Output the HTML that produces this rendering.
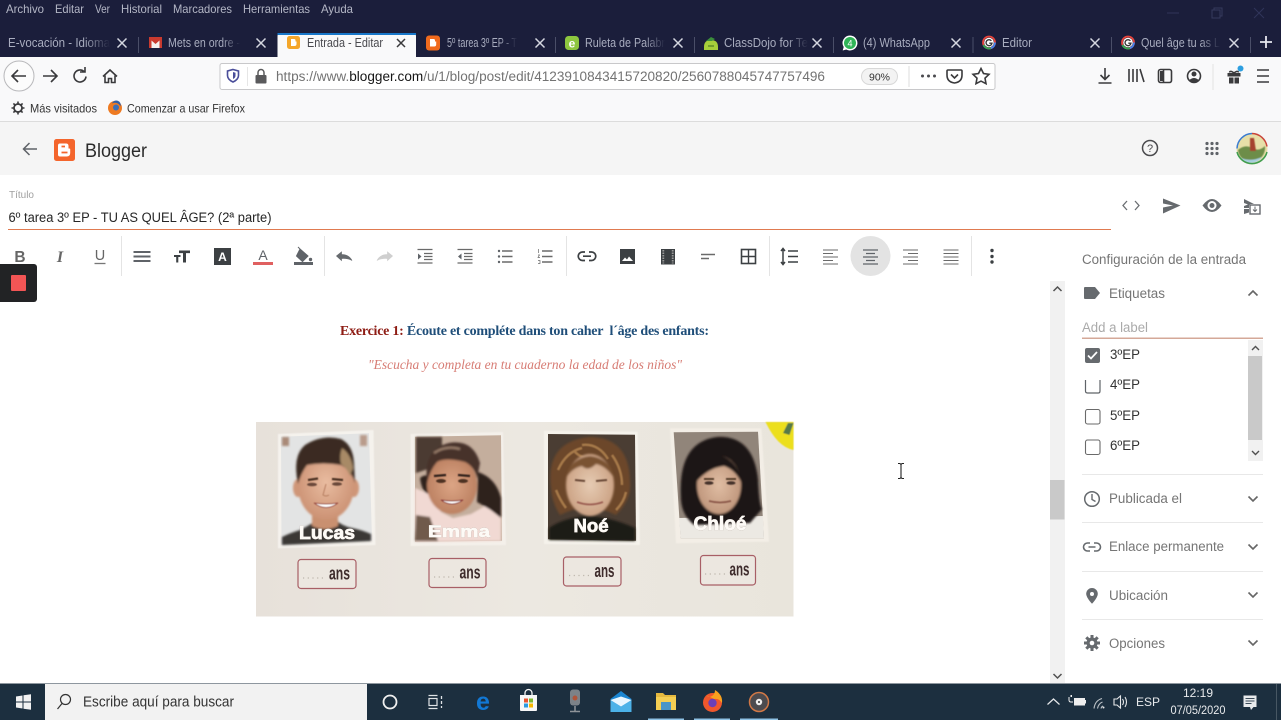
<!DOCTYPE html>
<html lang="es"><head><meta charset="utf-8"><title>Entrada - Editar</title>
<style>
html,body{margin:0;padding:0;width:1281px;height:720px;overflow:hidden;background:#fff}
svg{display:block}
text{font-family:"Liberation Sans",sans-serif}
.m{font-size:12px;fill:#b4b7c6}
.t{font-size:12.5px;fill:#a9adbf}
.s{font-size:13.5px;fill:#757575}
.i{fill:#666a6e}
.l{stroke:#5f6368;stroke-width:2;fill:none}
.n{stroke:#3a3a3c;stroke-width:1.6;fill:none}
.d{stroke:#e6e6e6;stroke-width:1}
.ts{stroke:#4a4e68;stroke-width:1}
.nm{font-weight:bold;fill:#fdfaf6;stroke:#fdfaf6;stroke-width:.7;filter:drop-shadow(.8px .8px .3px #6f5d52)}
.ans{font-weight:bold;font-size:18px;fill:#3e2c2c}
</style></head><body>
<svg width="1281" height="720" viewBox="0 0 1281 720" xmlns="http://www.w3.org/2000/svg">
<defs>
<filter id="b0" x="-20%" y="-20%" width="140%" height="140%"><feGaussianBlur stdDeviation=".6"/></filter>
<filter id="b1" x="-20%" y="-20%" width="140%" height="140%"><feGaussianBlur stdDeviation="1"/></filter>
<filter id="b2" x="-30%" y="-30%" width="160%" height="160%"><feGaussianBlur stdDeviation="3"/></filter>
<linearGradient id="pg" x1="0" x2="1" y1="0" y2="0"><stop offset="0" stop-color="#e7e1da"/><stop offset=".5" stop-color="#ece8e1"/><stop offset="1" stop-color="#e9e5dc"/></linearGradient>
<linearGradient id="fd" x1="0" x2="1" y1="0" y2="0"><stop offset="0" stop-color="#a9adbf"/><stop offset=".75" stop-color="#a9adbf"/><stop offset="1" stop-color="#1b1e3b"/></linearGradient>
<radialGradient id="sk1" cx=".5" cy=".45" r=".6"><stop offset="0" stop-color="#e9bca0"/><stop offset="1" stop-color="#c98e70"/></radialGradient>
<radialGradient id="sk2" cx=".5" cy=".5" r=".6"><stop offset="0" stop-color="#dca585"/><stop offset="1" stop-color="#b67a5b"/></radialGradient>
<radialGradient id="sk3" cx=".5" cy=".5" r=".6"><stop offset="0" stop-color="#e6cbb3"/><stop offset="1" stop-color="#c79b7c"/></radialGradient>
<radialGradient id="sk4" cx=".5" cy=".5" r=".6"><stop offset="0" stop-color="#e0bda3"/><stop offset="1" stop-color="#ba9076"/></radialGradient>
<g id="x"><path d="M-4.5-4.5L4.5 4.5M4.5-4.5L-4.5 4.5" stroke="#d5d7e0" stroke-width="1.5" fill="none"/></g>
<g id="gg"><circle r="6" fill="none" stroke="#e8453c" stroke-width="1.8"/><path d="M-5.5 2.5A6 6 0 0 0 2 5.7" fill="none" stroke="#34a853" stroke-width="1.8"/><path d="M2 5.7A6 6 0 0 0 6 0" fill="none" stroke="#4285f4" stroke-width="1.8"/><circle r="4.8" fill="#fff"/><path d="M2.4-1.7A3 3 0 1 0 3 .7H.3" fill="none" stroke="#333" stroke-width="1.3"/></g>
<g id="chd"><path d="M-4.5-2.5L0 2L4.5-2.5" fill="none" stroke="#666" stroke-width="1.6"/></g>
<g id="chu"><path d="M-4.5 2.5L0-2L4.5 2.5" fill="none" stroke="#666" stroke-width="1.6"/></g>
</defs>

<!-- browser chrome -->
<rect width="1281" height="57" fill="#1b1e3b"/>
<text class="m" x="6" y="13" textLength="38" lengthAdjust="spacingAndGlyphs">Archivo</text>
<text class="m" x="55" y="13" textLength="29" lengthAdjust="spacingAndGlyphs">Editar</text>
<text class="m" x="95" y="13" textLength="15" lengthAdjust="spacingAndGlyphs">Ver</text>
<text class="m" x="121" y="13" textLength="41" lengthAdjust="spacingAndGlyphs">Historial</text>
<text class="m" x="173" y="13" textLength="59" lengthAdjust="spacingAndGlyphs">Marcadores</text>
<text class="m" x="243" y="13" textLength="67" lengthAdjust="spacingAndGlyphs">Herramientas</text>
<text class="m" x="321" y="13" textLength="32" lengthAdjust="spacingAndGlyphs">Ayuda</text>
<path d="M1167 13h12" stroke="#30345a"/><rect x="1212" y="10" width="8" height="8" fill="none" stroke="#363a5c"/><path d="M1214 10V8h8v8h-2" fill="none" stroke="#363a5c"/><path d="M1254 8l10 10M1264 8l-10 10" stroke="#30345a"/>

<!-- tabs -->
<text x="8" y="47" style="font-size:12.5px;fill:url(#fd)" textLength="102" lengthAdjust="spacingAndGlyphs">E-vocación - Idioma</text>
<use href="#x" x="122" y="43"/><path class="ts" d="M138.5 37V53"/>
<rect x="149" y="37" width="13" height="11" fill="#f4f0ee"/><path d="M149 37h13v11h-2.500v-7.500l-4 3.500-4-3.500v7.500H149z" fill="#c93a2f"/>
<text x="168" y="47" style="font-size:12.5px;fill:url(#fd)" textLength="72" lengthAdjust="spacingAndGlyphs">Mets en ordre - </text>
<use href="#x" x="261" y="43"/>
<path d="M277.5 57V36q0-3 3-3H413q3 0 3 3V57z" fill="#f9f9fa"/><rect x="277.500" y="33" width="138.500" height="2" fill="#1877c9"/>
<rect x="287" y="36" width="13" height="13" rx="2.500" fill="#f4a62a"/><path d="M291 39h3q1.500 0 1.500 1.500v1h1v2.500q0 2-2 2h-3.500z" fill="#fff"/>
<text x="307" y="47" style="font-size:12.5px;fill:#4a4a4f" textLength="76" lengthAdjust="spacingAndGlyphs">Entrada - Editar</text>
<path d="M397 39l8 8M405 39l-8 8" stroke="#3a3a3c" stroke-width="1.500"/>
<rect x="426" y="35.5" width="14" height="15" rx="3" fill="#f06a1d"/><path d="M430 39h3.500q1.500 0 1.500 1.500v1h1.200v3q0 2-2 2H430z" fill="#fff"/>
<text x="447" y="47" style="font-size:12.5px;fill:url(#fd)" textLength="70" lengthAdjust="spacingAndGlyphs">5º tarea 3º EP - T</text>
<use href="#x" x="540" y="43"/><path class="ts" d="M555.5 37V53"/>
<rect x="565" y="36" width="14" height="14" rx="3.500" fill="#8dc63f"/><text x="572" y="47.5" text-anchor="middle" style="font-size:12px;font-weight:bold;fill:#fff">e</text>
<text x="585" y="47" style="font-size:12.5px;fill:url(#fd)" textLength="80" lengthAdjust="spacingAndGlyphs">Ruleta de Palabr</text>
<use href="#x" x="678" y="43"/><path class="ts" d="M694.5 37V53"/>
<path d="M704 47q0-7 7-7t7 7v3h-14z" fill="#a6cf3a"/><path d="M706 41l5-4 4 2-3 2z" fill="#3b8f3b"/><path d="M708 46h6" stroke="#3c6b1f"/>
<text x="724" y="47" style="font-size:12.5px;fill:url(#fd)" textLength="84" lengthAdjust="spacingAndGlyphs">ClassDojo for Te</text>
<use href="#x" x="817" y="43"/><path class="ts" d="M833.5 37V53"/>
<path d="M850 35.5a7.500 7.500 0 1 1-3.800 14l-3.500 1 1-3.500a7.500 7.500 0 0 1 6.300-11.500z" fill="#fff"/><circle cx="850" cy="43" r="6" fill="#2fb457"/><text x="850" y="46.5" text-anchor="middle" style="font-size:9px;fill:#fff">4</text>
<text x="863" y="47" class="t" textLength="67" lengthAdjust="spacingAndGlyphs">(4) WhatsApp</text>
<use href="#x" x="956" y="43"/><path class="ts" d="M973 37V53"/>
<use href="#gg" x="989" y="42.5"/>
<text x="1002" y="47" class="t" textLength="30" lengthAdjust="spacingAndGlyphs">Editor</text>
<use href="#x" x="1095" y="43"/><path class="ts" d="M1111.5 37V53"/>
<use href="#gg" x="1128" y="42.5"/>
<text x="1141" y="47" style="font-size:12.5px;fill:url(#fd)" textLength="79" lengthAdjust="spacingAndGlyphs">Quel âge tu as L</text>
<use href="#x" x="1234" y="43"/><path class="ts" d="M1250.5 37V53"/>
<path d="M1260 42h12M1266 36v12" stroke="#e6e7ee" stroke-width="1.800"/>

<!-- nav bar -->
<rect y="57" width="1281" height="64.5" fill="#f9f9fa"/>
<rect y="121" width="1281" height="1" fill="#dcdcdc"/>
<circle cx="19" cy="76" r="15" fill="#fcfcfc" stroke="#b8b8bb"/>
<path class="n" d="M26 76H12M18 70l-6 6 6 6"/>
<path class="n" d="M43 76H57M51 70l6 6-6 6"/>
<path class="n" d="M86 76.5a6 6 0 1 1-2-5M85 67v5h-5"/>
<path class="n" d="M103 76.5l7-6.500 7 6.500M105 75.500v7h3.500v-4h3v4h3.500v-7"/>
<rect x="220" y="63.5" width="775" height="26" rx="2" fill="#fff" stroke="#c8c8ca"/>
<path d="M233 69.5l5.500 1.500v4.500q0 4-5.500 6.500-5.500-2.500-5.500-6.500V71z" fill="none" stroke="#4a4e9a" stroke-width="1.600"/><path d="M233 72l2.500.7v3q0 2-2.500 3.300z" fill="#4a4e9a"/>
<path class="d" d="M247.5 67V86"/>
<rect x="255.5" y="75" width="11" height="8.500" rx="1" fill="#5a5a5c"/><path d="M258 75v-2.500a3 3 0 0 1 6 0V75" fill="none" stroke="#5a5a5c" stroke-width="1.500"/>
<text x="276" y="81" style="font-size:13.5px;fill:#737373" textLength="549" lengthAdjust="spacingAndGlyphs">https://www.<tspan fill="#161616">blogger.com</tspan>/u/1/blog/post/edit/4123910843415720820/2560788045747757496</text>
<rect x="861.5" y="68.5" width="36" height="16" rx="8" fill="#f3f3f3" stroke="#d8d8d8"/>
<text x="879.5" y="80.5" text-anchor="middle" style="font-size:10.5px;fill:#333">90%</text>
<path d="M909 66V87" stroke="#ddd"/>
<circle cx="922.5" cy="76" r="1.500" fill="#4a4a4f"/><circle cx="928.5" cy="76" r="1.500" fill="#4a4a4f"/><circle cx="934.5" cy="76" r="1.500" fill="#4a4a4f"/>
<path d="M948 70h13q1 0 1 1v4q0 7-7.500 8-7.500-1-7.500-8v-4q0-1 1-1z" class="n"/><path d="M951 74.5l3.500 3.500 3.500-3.500" class="n"/>
<path class="n" d="M981 68.5l2.500 5 5.500.8-4 3.900 1 5.500-5-2.600-5 2.600 1-5.500-4-3.900 5.500-.8z"/>
<path class="n" d="M1105 68v11M1100.500 75l4.500 4.500 4.500-4.500M1098.500 83h13"/>
<path class="n" d="M1129 69v13M1133 69v13M1137 69v13M1140 69l4 13"/>
<rect x="1158.5" y="69.5" width="13" height="13" rx="2" class="n"/><path class="n" d="M1163.5 70v12"/><path d="M1160 71h3v10h-3z" fill="#3a3a3c"/>
<circle cx="1194" cy="76" r="6.5" class="n"/><circle cx="1194" cy="74" r="2.5" fill="#3a3a3c"/><path d="M1189.5 80q4.500-4 9 0l-2 2h-5z" fill="#3a3a3c"/>
<path d="M1213 64V90" stroke="#e3e3e3"/>
<path d="M1227.500 73h13v3.500h-13zM1229 77.500h4.500v6H1229zM1234.500 77.500h4.500v6h-4.500z" fill="#3a3a3c"/><path d="M1234 73q-4-3-4.500-.5M1234 73q4-3 4.500-.5" stroke="#3a3a3c" fill="none" stroke-width="1.500"/><circle cx="1240.5" cy="68.5" r="3" fill="#2e9fe0"/>
<path class="n" d="M1257 70h12M1257 76h12M1257 82h12"/>

<!-- bookmarks -->
<g transform="translate(18 108)"><circle r="4" fill="none" stroke="#3a3a3c" stroke-width="1.800"/><path d="M0-6.500v3M0 3.500v3M-6.500 0h3M3.500 0h3M-4.600-4.600l2 2M2.600 2.600l2 2M4.600-4.600l-2 2M-2.600 2.600l-2 2" stroke="#3a3a3c" stroke-width="1.600"/></g>
<text x="30" y="112.5" style="font-size:12px;fill:#333" textLength="67" lengthAdjust="spacingAndGlyphs">Más visitados</text>
<circle cx="115" cy="108" r="7" fill="#ee7a22"/><path d="M112 103.500a6 6 0 0 1 8.500 3 4.500 4.500 0 1 0-8.500-3z" fill="#2f5fa8"/><circle cx="116" cy="107.5" r="3" fill="#3a6fb8"/>
<text x="127" y="112.5" style="font-size:12px;fill:#333" textLength="118" lengthAdjust="spacingAndGlyphs">Comenzar a usar Firefox</text>

<!-- blogger header -->
<rect y="122" width="1281" height="53" fill="#f5f5f5"/>
<path d="M37 149H23.500M29.500 143l-6 6 6 6" fill="none" stroke="#5f6368" stroke-width="1.500"/>
<rect x="54" y="139" width="21" height="22" rx="2.500" fill="#f4652c"/><path d="M60 143.500h6q2.500 0 2.500 2.500v2.500h1q.7 0 .7.800v3.700q0 3.500-3.500 3.500H60q-2 0-2-2v-9q0-2 2-2z" fill="#fff"/><path d="M61.500 146.500h3.500M61.500 152.500h6" stroke="#f4652c" stroke-width="1.800"/>
<text x="85" y="157" style="font-size:19.5px;fill:#2b2b2b" textLength="62" lengthAdjust="spacingAndGlyphs">Blogger</text>
<circle cx="1150" cy="148" r="7.5" fill="none" stroke="#4a4a4d" stroke-width="1.500"/><text x="1150" y="152" text-anchor="middle" style="font-size:11px;fill:#4a4a4d">?</text>
<g fill="#5f6368"><circle cx="1207" cy="143.5" r="1.600"/><circle cx="1212" cy="143.5" r="1.600"/><circle cx="1217" cy="143.5" r="1.600"/><circle cx="1207" cy="148.5" r="1.600"/><circle cx="1212" cy="148.5" r="1.600"/><circle cx="1217" cy="148.5" r="1.600"/><circle cx="1207" cy="153.5" r="1.600"/><circle cx="1212" cy="153.5" r="1.600"/><circle cx="1217" cy="153.5" r="1.600"/></g>
<circle cx="1252" cy="149" r="15.5" fill="#e7dfa8"/>
<g filter="url(#b0)"><path d="M1238 150q7-6 14-2t13-2q1 12-13 17-13-3-14-13z" fill="#6d8d48"/><path d="M1241 158q10 4 21-1-4 6-11 6t-10-5z" fill="#a7cfe0"/><path d="M1250 138l4 0 2 13h-6z" fill="#a5432d"/></g>
<path d="M1252 133.500a15.500 15.500 0 0 1 15 13" fill="none" stroke="#c9443a" stroke-width="1.500"/><path d="M1237 152a15.500 15.500 0 0 0 30 0" fill="none" stroke="#3f9d4e" stroke-width="1.500"/><path d="M1252 133.500a15.500 15.500 0 0 0-15 15" fill="none" stroke="#3b7cd0" stroke-width="1.500"/>

<!-- title -->
<text x="9" y="198" style="font-size:10.5px;fill:#a0a0a0" textLength="25" lengthAdjust="spacingAndGlyphs">Título</text>
<text x="8.5" y="222" style="font-size:13.5px;fill:#262626" textLength="263" lengthAdjust="spacingAndGlyphs">6º tarea 3º EP - TU AS QUEL ÂGE? (2ª parte)</text>
<rect x="8" y="229" width="1103" height="1" fill="#e07a50"/>
<path d="M1127 201l-4 4.500 4 4.500M1135 201l4 4.500-4 4.500" fill="none" stroke="#6a6e72" stroke-width="1.300"/>
<path d="M1163 198.500l17.500 7-17.500 8v-6l10-2-10-2z" fill="#666a6e"/>
<path d="M1202.500 205.500q9.500-13 19 0-9.500 13-19 0z" fill="#666a6e"/><circle cx="1212" cy="205.500" r="4.500" fill="#fff"/><circle cx="1212" cy="205.500" r="2.500" fill="#666a6e"/>
<path d="M1244 199l10 5h-3q-2 0-2 2v2h-5v-2l4-1.500-4-1.500zM1244 209h5v3.500l-5 1.500z" fill="#666a6e"/><rect x="1250" y="205" width="10" height="9" fill="none" stroke="#666a6e" stroke-width="1.400"/><path d="M1255 206.500v5M1253 209.500l2 2 2-2" stroke="#666a6e" fill="none"/>

<!-- toolbar -->
<g stroke="#e4e4e4"><path d="M121.500 236V276M324.500 236V276M566.500 236V276M769.500 236V276M971.500 236V276"/></g>
<text x="20" y="262" text-anchor="middle" style="font-size:15.5px;font-weight:bold;fill:#666">B</text>
<text x="60" y="262" text-anchor="middle" style="font-size:16px;font-weight:bold;font-style:italic;fill:#666;font-family:'Liberation Serif',serif">I</text>
<text x="100" y="260" text-anchor="middle" style="font-size:14.5px;fill:#666">U</text><path d="M94.500 263.500h11" stroke="#777" stroke-width="1.300"/>
<path class="l" d="M133.500 252h17M133.500 256.500h17M133.500 261h17" stroke-width="1.800"/>
<path d="M179 250.500h11v2.600h-4v9.400h-3v-9.400h-4zM174 255h6.500v2h-2.200v5.500h-2.100V257H174z" fill="#3c4043"/>
<rect x="214" y="248" width="17" height="17" fill="#3c4043"/><text x="222.5" y="261" text-anchor="middle" style="font-size:12px;font-weight:bold;fill:#fff">A</text>
<text x="263" y="260" text-anchor="middle" style="font-size:14px;fill:#5f6368">A</text><rect x="253" y="262" width="20" height="3" fill="#e06060"/>
<path d="M300 249l8 7-5.500 5.500-6-5.500zM298 247l4 4" fill="#5f6368" stroke="#5f6368"/><circle cx="310.5" cy="259.5" r="1.700" fill="#5f6368"/><rect x="294" y="262" width="19" height="3" fill="#5f6368"/>
<path d="M336.5 256l5-4v2.500q7 0 10.500 6-4-2.500-10.500-2v2z" fill="#666a6e" stroke="#666a6e" stroke-width=".7"/>
<path d="M392.500 256l-5-4v2.500q-7 0-10.500 6 4-2.500 10.500-2v2z" fill="#cfcfcf" stroke="#cfcfcf" stroke-width=".7"/>
<path d="M417.5 249.500h15M424 253.500h8.500M424 256.500h8.500M424 259.500h8.500M417.500 263h15" style="stroke:#6a6a6a;stroke-width:1.300;fill:none"/><path d="M418 253.500l3.500 3-3.500 3z" fill="#5f6368"/>
<path d="M457.5 249.500h15M464 253.500h8.500M464 256.500h8.500M464 259.500h8.500M457.500 263h15" style="stroke:#6a6a6a;stroke-width:1.300;fill:none"/><path d="M461.5 253.500l-3.500 3 3.500 3z" fill="#5f6368"/>
<path d="M502 251h10.500M502 256.500h10.500M502 262h10.500" style="stroke:#6a6a6a;stroke-width:1.400"/><circle cx="499" cy="251" r="1.200" fill="#5f6368"/><circle cx="499" cy="256.5" r="1.200" fill="#5f6368"/><circle cx="499" cy="262" r="1.200" fill="#5f6368"/>
<path d="M542 251h10.500M542 256.500h10.500M542 262h10.500" style="stroke:#6a6a6a;stroke-width:1.400"/><path d="M538.500 249v4M538 255h1.500l-1.500 2.500h2M538 260.500h2v3h-2" stroke="#6a6a6a" fill="none" stroke-width=".7"/>
<path d="M585 252h-2.500a4.200 4.200 0 0 0 0 8.500h2.500M589 252h2.500a4.200 4.200 0 0 1 0 8.500H589M583 256.200h8" fill="none" stroke="#3c4043" stroke-width="1.700"/>
<rect x="620" y="249" width="15" height="15" fill="#3c4043"/><path d="M622 261l3-3.500 2 2 2-3 4 4.500z" fill="#fff"/>
<rect x="661" y="249" width="14" height="15.500" fill="#3c4043"/><path d="M663.300 250v13.500M672.700 250v13.500" stroke="#9a9a9a" stroke-width="1.800" stroke-dasharray="1.500 1"/>
<path d="M701 254.500h14M701 258.500h8" stroke="#6a6a6a" stroke-width="1.400"/>
<rect x="741.5" y="249.5" width="14" height="14" fill="none" stroke="#3c4043" stroke-width="1.600"/><path d="M748.500 249.500v14M741.500 256.500h14" stroke="#3c4043" stroke-width="1.400"/>
<path d="M783 249v15M781 251l2-2.500 2 2.500M781 262l2 2.500 2-2.500" fill="none" stroke="#3c4043" stroke-width="1.500"/><path d="M788 251h10M788 256.500h10M788 262h10" stroke="#3c4043" stroke-width="1.600"/>
<path d="M823 250h15M823 253.500h10M823 257h15M823 260.500h10M823 264h15" stroke="#6a6a6a" stroke-width="1.100"/>
<circle cx="870.5" cy="256" r="20" fill="#e3e3e3"/>
<path d="M863 250h15M866 253.500h9M863 257h15M866 260.500h9M863 264h15" stroke="#5f6368" stroke-width="1.300"/>
<path d="M903 250h15M908 253.500h10M903 257h15M908 260.500h10M903 264h15" stroke="#6a6a6a" stroke-width="1.100"/>
<path d="M943.5 250h15M943.500 253.500h15M943.500 257h15M943.500 260.500h15M943.500 264h15" stroke="#6a6a6a" stroke-width="1.100"/>
<circle cx="992" cy="250.5" r="1.700" fill="#3c4043"/><circle cx="992" cy="256.5" r="1.700" fill="#3c4043"/><circle cx="992" cy="262" r="1.700" fill="#3c4043"/>
<text x="1082" y="264" class="s" textLength="164" lengthAdjust="spacingAndGlyphs">Configuración de la entrada</text>

<!-- rec widget -->
<rect x="-4" y="264" width="41" height="38" rx="3" fill="#222325"/>
<rect x="11" y="275" width="15" height="16" rx="1" fill="#f25555"/>

<!-- post content -->
<text x="340" y="335" style="font-family:'Liberation Serif',serif;font-weight:bold;font-size:14px;fill:#1f4e79" textLength="369" lengthAdjust="spacing" xml:space="preserve"><tspan fill="#8e1c14">Exercice 1:</tspan> Écoute et compléte dans ton caher  l´âge des enfants:</text>
<text x="368" y="369" style="font-family:'Liberation Serif',serif;font-style:italic;font-size:13.5px;fill:#d77c74" textLength="314" lengthAdjust="spacing">"Escucha y completa en tu cuaderno la edad de los niños"</text>

<!-- photo -->
<rect x="256" y="422" width="537.5" height="194.5" fill="url(#pg)"/>
<g filter="url(#b0)">
<path d="M793.5 422v28q-16-3-28-28z" fill="#ecdf1f"/><path d="M783 433l5-10h5.500l-4 12z" fill="#55794a"/>
<path d="M278 434l95.500-4 2 115-97.500 3.300z" fill="#f5f2ed"/>
<path d="M410.600 434l92.400-2 3 113-95.400 1z" fill="#f4f0ea"/>
<path d="M544 430.700l93.600 1 2.400 113.300-96-1z" fill="#f5f2eb"/>
<path d="M670 428.300h91.400l7.600 113.400-93 1.600z" fill="#f3eee6"/>
</g>

<!-- Lucas -->
<path d="M281 436.700l88-3.400 3 107.400-90.500 4.300z" fill="#e3e4e4"/>
<g filter="url(#b1)">
<rect x="282" y="437" width="7" height="9" fill="#a98a78"/><rect x="360" y="435" width="7" height="11" fill="#b99b8b"/>
<path d="M282 545v-8q8-4 18-7 12-6 16-10h20q6 6 16 8 10 2 19 6v7z" fill="#3b3734"/>
<path d="M312 512h26v14q-13 6-26 0z" fill="#c9906f"/>
<ellipse cx="298" cy="488" rx="5" ry="9" fill="#cf9678"/><ellipse cx="354" cy="488" rx="5" ry="9" fill="#cf9678"/>
<ellipse cx="326" cy="486" rx="28" ry="34" fill="url(#sk1)"/>
<path d="M298 484q-6-28 7-39 17-11 36-6 12 6 13 24l1 20q-4-13-14-18-18-3-34 0-6 8-9 19z" fill="#3a2a20"/>
<path d="M342 448q9 6 11 20l-3 8q-3-8-9-12-2-8 1-16z" fill="#a88a66"/>
</g>
<g filter="url(#b0)">
<path d="M308 480l10-1.500M332 479l11 1" stroke="#4c3024" stroke-width="2.200"/>
<ellipse cx="312" cy="484.500" rx="5" ry="1.800" fill="#6b4a3a"/><ellipse cx="337" cy="484" rx="5" ry="1.800" fill="#6b4a3a"/>
<path d="M326 484l-3 11q3 2 6 0" stroke="#b77f62" fill="none"/>
<path d="M314 503q12 9 24 0-12 2-24 0z" fill="#fff" stroke="#9e5448"/>
</g>
<text class="nm" x="327" y="539" text-anchor="middle" style="font-size:18px" textLength="56" lengthAdjust="spacingAndGlyphs">Lucas</text>

<!-- Emma -->
<path d="M415 436.700l86-1.400 1 105.400-87 1z" fill="#c4ae9d"/>
<g filter="url(#b1)">
<path d="M416 437h26v20l-14 12-12 4z" fill="#4c3a32"/>
<path d="M415 488l14 6 12 18 12 6 18-4 14-8 16 12v23l-86 1z" fill="#f1d9d3"/>
<path d="M478 472q18 6 23 26v20l-10-8-14-8z" fill="#2f211b"/>
<path d="M420 478q6-5 10 0v16q-8 0-10-16z" fill="#2f211b"/>
<path d="M416 515l14 2 8 24h-23z" fill="#705a4c"/>
<ellipse cx="452" cy="485" rx="25" ry="29" fill="url(#sk2)"/>
<path d="M427 483q-4-34 22-40 24-4 31 20l-3 16q-2-12-12-17-20-5-28 0-7 8-10 21z" fill="#46302a"/>
<path d="M434 453q12-8 26-4" stroke="#a08470" stroke-width="2" fill="none"/>
</g>
<g filter="url(#b0)">
<path d="M434 476l12-1M458 475l12 1" stroke="#33201a" stroke-width="2.200"/>
<ellipse cx="441" cy="481" rx="5" ry="2" fill="#4e3024"/><ellipse cx="463" cy="481" rx="5" ry="2" fill="#4e3024"/>
<path d="M441 500q11 8 22 0-11 2-22 0z" fill="#fff" stroke="#8e3f3c"/>
</g>
<text class="nm" x="459" y="537" text-anchor="middle" style="font-size:17px" textLength="62" lengthAdjust="spacingAndGlyphs">Emma</text>

<!-- Noé -->
<path d="M548 434l87 .7 1 106-88-1.400z" fill="#4a3d33"/>
<g filter="url(#b1)">
<path d="M549 540v-12q14-10 38-12 24 1 48 12v13z" fill="#1f1a18"/>
<path d="M551 488q-6-46 38-51 40 0 41 44 2 18-14 34-28-14-56 0-8-12-9-27z" fill="#6c4729"/>
</g>
<g filter="url(#b0)">
<path d="M558 470q8-18 24-22M582 445q16-2 26 14M612 455q10 14 10 30M556 490q4 10 10 18M626 492q-2 10-10 18M575 452q8 8 20 6" stroke="#a6794a" stroke-width="2.500" fill="none"/>
</g>
<g filter="url(#b1)">
<ellipse cx="590" cy="485" rx="24" ry="31" fill="url(#sk3)"/>
<path d="M566 478q4-20 24-22 20 2 24 22-8-12-18-14-8 8-14 2-10 2-16 12z" fill="#7a5230"/>
</g>
<g filter="url(#b0)">
<path d="M575 480l10 1M596 481l11-1" stroke="#6b4a38" stroke-width="2"/>
<path d="M577 502q13 5 26 0" stroke="#9c5f52" stroke-width="1.800" fill="none"/>
</g>
<text class="nm" x="591" y="532" text-anchor="middle" style="font-size:18px" textLength="35" lengthAdjust="spacingAndGlyphs">Noé</text>

<!-- Chloé -->
<path d="M673.700 432.300l84.300-.6 6 106.600h-83.300z" fill="#91857a"/>
<path d="M679 518l84-2 1 22.300h-83.300z" fill="#ece9e3"/>
<g filter="url(#b1)">
<path d="M681 500q-4-58 36-63 36-2 41 42 1 26 4 30l-12 14-56 2q-12-10-13-25z" fill="#1f1816"/>
<ellipse cx="719" cy="485" rx="22" ry="29" fill="url(#sk4)"/>
<path d="M696 482q2-22 18-26 10-2 18 6 8 8 10 22-6-14-18-18-16 2-28 16z" fill="#1f1816"/>
</g>
<g filter="url(#b0)">
<path d="M704 479l10 0M726 479l10 0" stroke="#4a3020" stroke-width="1.800"/>
<ellipse cx="709" cy="483" rx="4.500" ry="1.800" fill="#45302a"/><ellipse cx="731" cy="483" rx="4.500" ry="1.800" fill="#45302a"/>
<path d="M709 501q11 3 22 0" stroke="#8d5a4c" stroke-width="1.800" fill="none"/>
</g>
<text class="nm" x="720" y="530" text-anchor="middle" style="font-size:19px" textLength="53" lengthAdjust="spacingAndGlyphs">Chloé</text>

<!-- ans boxes -->
<g fill="#ece7e0" stroke="#a85f66" stroke-width="1.200">
<rect x="298" y="559.5" width="58" height="29" rx="3"/><rect x="429" y="558.5" width="57" height="29" rx="3"/><rect x="563.5" y="557" width="57.5" height="29" rx="3"/><rect x="700.5" y="555.5" width="55" height="29.5" rx="3"/>
</g>
<g stroke="#bdb6ac" stroke-width="1.200" stroke-dasharray="1.200 3.500"><path d="M303 578h20M434 577h20M569 575.500h20M705 574h20"/></g>
<text class="ans" x="329" y="579.5" textLength="21" lengthAdjust="spacingAndGlyphs">ans</text>
<text class="ans" x="459.5" y="578.5" textLength="21" lengthAdjust="spacingAndGlyphs">ans</text>
<text class="ans" x="594.5" y="577" textLength="20" lengthAdjust="spacingAndGlyphs">ans</text>
<text class="ans" x="729.500" y="575.5" textLength="20" lengthAdjust="spacingAndGlyphs">ans</text>

<!-- cursor -->
<path d="M898 463.500h2l1 1 1-1h2M901 464.500v13M898 478.500h2l1-1 1 1h2" fill="none" stroke="#222" stroke-width="1.100"/>

<!-- main scrollbar -->
<rect x="1050" y="281" width="15" height="402" fill="#f1f1f1"/>
<rect x="1050" y="480" width="14.5" height="39.5" fill="#c9c9c9"/>
<path d="M1053.5 291l4-4 4 4" fill="none" stroke="#505050" stroke-width="1.500"/>
<path d="M1053.5 674l4 4 4-4" fill="none" stroke="#505050" stroke-width="1.500"/>

<!-- side panel -->
<path d="M1085 287h10l5 6-5 6h-10q-1 0-1-1v-10q0-1 1-1z" class="i"/>
<text x="1109" y="298" class="s" textLength="56" lengthAdjust="spacingAndGlyphs">Etiquetas</text>
<use href="#chu" x="1253" y="293"/>
<text x="1082" y="332" style="font-size:13.5px;fill:#aaa" textLength="66" lengthAdjust="spacingAndGlyphs">Add a label</text>
<rect x="1082" y="337.5" width="181" height="1.500" fill="#d4a898"/>
<rect x="1248" y="340" width="15" height="121" fill="#f1f1f1"/><rect x="1248" y="356" width="14" height="84" fill="#c9c9c9"/>
<path d="M1252 350l3.500-3.500 3.500 3.500" fill="none" stroke="#505050" stroke-width="1.400"/><path d="M1252 451l3.500 3.500 3.500-3.500" fill="none" stroke="#505050" stroke-width="1.400"/>
<rect x="1085" y="348" width="15" height="15" rx="2" fill="#666a6e"/><path d="M1088 355.500l3 3 6-6.500" fill="none" stroke="#fff" stroke-width="1.700"/>
<text x="1110" y="359" style="font-size:13.5px;fill:#333" textLength="30" lengthAdjust="spacingAndGlyphs">3ºEP</text>
<path d="M1085.5 380v11q0 2 2 2h11q1.500 0 1.500-2V380" fill="none" stroke="#5f6368" stroke-width="1.200"/>
<text x="1110" y="389" style="font-size:13.5px;fill:#333" textLength="30" lengthAdjust="spacingAndGlyphs">4ºEP</text>
<rect x="1085.5" y="409.5" width="14.5" height="14.5" rx="2" fill="none" stroke="#6a6a6a" stroke-width="1.100"/>
<text x="1110" y="420" style="font-size:13.5px;fill:#333" textLength="30" lengthAdjust="spacingAndGlyphs">5ºEP</text>
<rect x="1085.5" y="440" width="14.5" height="14.5" rx="2" fill="none" stroke="#6a6a6a" stroke-width="1.100"/>
<text x="1110" y="450" style="font-size:13.5px;fill:#333" textLength="30" lengthAdjust="spacingAndGlyphs">6ºEP</text>
<g stroke="#e8e8e8"><path d="M1082 474.500h181M1082 522.500h181M1082 571.500h181M1082 619.500h181"/></g>
<circle cx="1092" cy="499" r="7.3" fill="none" stroke="#666a6e" stroke-width="1.500"/><path d="M1092 494v5.500l3.500 2" fill="none" stroke="#666a6e" stroke-width="1.400"/>
<text x="1109" y="503" class="s" textLength="73" lengthAdjust="spacingAndGlyphs">Publicada el</text><use href="#chd" x="1253" y="499"/>
<path d="M1090 543h-2.500a4 4 0 0 0 0 8h2.500M1094 543h2.500a4 4 0 0 1 0 8H1094M1088.500 547h7" fill="none" stroke="#666a6e" stroke-width="1.600"/>
<text x="1109" y="551" class="s" textLength="115" lengthAdjust="spacingAndGlyphs">Enlace permanente</text><use href="#chd" x="1253" y="547"/>
<path d="M1092 588a5.800 5.800 0 0 1 5.800 5.800c0 4-5.800 10-5.800 10s-5.800-6-5.800-10A5.800 5.800 0 0 1 1092 588z" class="i"/><circle cx="1092" cy="594" r="2" fill="#fff"/>
<text x="1109" y="600" class="s" textLength="59" lengthAdjust="spacingAndGlyphs">Ubicación</text><use href="#chd" x="1253" y="595"/>
<g transform="translate(1092 643)"><circle r="5.500" class="i"/><path d="M0-8v4M0 4v4M-8 0h4M4 0h4M-5.700-5.700l3 3M2.700 2.700l3 3M5.700-5.700l-3 3M-2.700 2.700l-3 3" stroke="#666a6e" stroke-width="3"/><circle r="2.300" fill="#fff"/></g>
<text x="1109" y="648" class="s" textLength="56" lengthAdjust="spacingAndGlyphs">Opciones</text><use href="#chd" x="1253" y="643"/>

<!-- taskbar -->
<rect y="683" width="1281" height="37" fill="#1c2f3f"/>
<rect y="683" width="1281" height="1" fill="#8e979f"/>
<path d="M16 696.500l6.500-1v6h-6.500zM23.500 695.300l7.500-1.100v7.300h-7.500zM16 702.500h6.500v6l-6.500-1zM23.500 702.500H31v7.300l-7.500-1.100z" fill="#f2f2f2"/>
<rect x="45" y="684" width="322" height="36" fill="#f2f2f2"/>
<circle cx="65.5" cy="699.5" r="5" fill="none" stroke="#333" stroke-width="1.200"/><path d="M62 703.500l-4.500 5.500" stroke="#333" stroke-width="1.200"/>
<text x="83" y="706.5" style="font-size:14.5px;fill:#333" textLength="151" lengthAdjust="spacingAndGlyphs">Escribe aquí para buscar</text>
<circle cx="390" cy="702" r="6.500" fill="none" stroke="#f0f0f0" stroke-width="1.800"/>
<path d="M428.500 695.500h9M428.500 708.500h9" stroke="#dfe3e6" stroke-width="1.200"/><rect x="429" y="698.5" width="8" height="7" fill="none" stroke="#dfe3e6" stroke-width="1.200"/><path d="M441.500 696v3M441.500 701v3M441.500 706v2" stroke="#dfe3e6" stroke-width="1.300"/>
<text x="483" y="710" text-anchor="middle" style="font-size:25px;font-weight:bold;fill:#1278d4">e</text>
<path d="M520 695h17v15q0 1-1 1h-15q-1 0-1-1z" fill="#f7f7f7"/><path d="M525 695v-2a3.500 3.500 0 0 1 7 0v2" fill="none" stroke="#f7f7f7" stroke-width="1.300"/><rect x="524" y="698.5" width="4" height="4" fill="#e9532e"/><rect x="529" y="698.5" width="4" height="4" fill="#7db72d"/><rect x="524" y="703.5" width="4" height="4" fill="#2a9ae0"/><rect x="529" y="703.5" width="4" height="4" fill="#f7b700"/>
<rect x="570" y="689.5" width="10" height="16" rx="3" fill="#7c8288"/><circle cx="575" cy="698" r="2.500" fill="#b0553a"/><path d="M575 706v5M570 711.500h10" stroke="#8e9499" stroke-width="1.500"/>
<path d="M610.500 699l10.500-8 10.500 8v13h-21z" fill="#1b86d2"/><path d="M610.500 700l10.500 6.500 10.500-6.500v12h-21z" fill="#4cb2e8"/><path d="M610.500 700l10.500 6.500 10.500-6.500-10.500-3.500z" fill="#e8f6ff"/>
<path d="M656 693h7l2 2h11v5h-20z" fill="#e5b93f"/><rect x="656" y="697" width="20" height="13" fill="#f5cf53"/><rect x="661" y="702" width="10" height="8" fill="#4a95c7"/>
<circle cx="712.5" cy="702.5" r="9.500" fill="#f0572c"/><path d="M706 695q3 3 6 1 3-2 3-6 8 5 7 13-3-5-8-4z" fill="#f9a11f"/><circle cx="712.5" cy="703" r="4.200" fill="#6b3fb7"/>
<circle cx="759" cy="702" r="9.500" fill="#4b4b4f" stroke="#d17846" stroke-width="1.500"/><circle cx="759" cy="702" r="3.200" fill="#eee"/><circle cx="759" cy="702" r="1" fill="#333"/>
<g fill="#8fc3e6"><rect x="648" y="718.5" width="36" height="1.500"/><rect x="694" y="718.500" width="36" height="1.500"/><rect x="740" y="718.5" width="38" height="1.500"/></g>
<path d="M1047.5 704.500l6-5.500 6 5.500" fill="none" stroke="#e6e8ea" stroke-width="1.200"/>
<path d="M1069 697v3q0 2 2 2h2M1071 697v-2M1071.500 697v-2" stroke="#eee" fill="none"/><rect x="1074" y="698" width="11" height="7.500" fill="#eee"/><rect x="1085" y="700" width="1" height="3.500" fill="#eee"/>
<path d="M1094 708.500q1-8 8-10M1097.500 708.500q1-5 5-6.500M1101 708.500q.5-2 2-2.500" fill="none" stroke="#bcc2c7" stroke-width="1.100"/><circle cx="1103.5" cy="707.5" r="1" fill="#e5e7e9"/>
<path d="M1114 699h3l3.500-3v12l-3.500-3h-3z" fill="none" stroke="#e6e8ea" stroke-width="1.100"/><path d="M1122.5 699q2 3 0 6M1125 697q3 5 0 10" fill="none" stroke="#e6e8ea" stroke-width="1.100"/>
<text x="1148" y="706" text-anchor="middle" style="font-size:12px;fill:#e8eaec">ESP</text>
<text x="1198" y="697" text-anchor="middle" style="font-size:12px;fill:#e8eaec">12:19</text>
<text x="1198" y="714" text-anchor="middle" style="font-size:12px;fill:#e8eaec" textLength="55" lengthAdjust="spacingAndGlyphs">07/05/2020</text>
<path d="M1243.5 695.500h13v11.500h-3l-2.500 3-1-3h-6.500z" fill="#e8eaec"/><path d="M1245.5 698.500h9M1245.5 701h9M1245.5 703.500h6" stroke="#3a4a58"/>
<rect x="1276" y="684" width="1" height="36" fill="#475763"/>
</svg>
</body></html>
